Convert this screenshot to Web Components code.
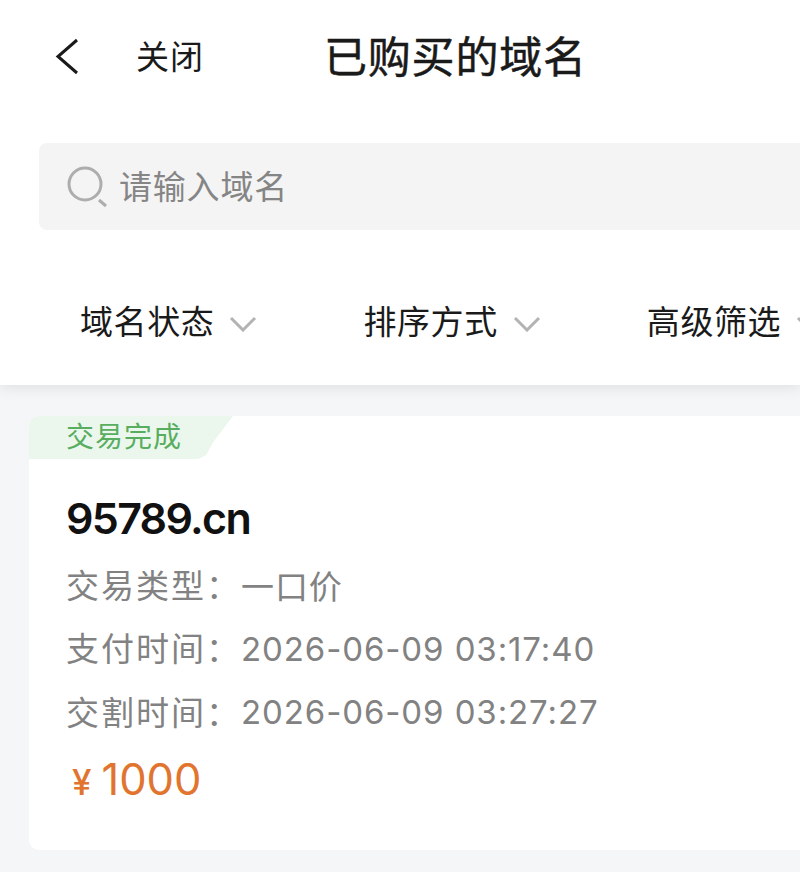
<!DOCTYPE html>
<html lang="zh-CN">
<head>
<meta charset="utf-8">
<title>已购买的域名</title>
<style>
  html, body { margin: 0; padding: 0; }
  body {
    width: 800px;
    height: 872px;
    overflow: hidden;
    background: #f5f6f8;
    font-family: "Noto Sans CJK SC", "Noto Sans", sans-serif;
  }
</style>
</head>
<body>
<top-panel>
  <nav-bar title-text="已购买的域名" close-text="关闭"></nav-bar>
  <search-box placeholder="请输入域名"></search-box>
  <filter-bar>
    <filter-item>域名状态</filter-item>
    <filter-item>排序方式</filter-item>
    <filter-item>高级筛选</filter-item>
  </filter-bar>
</top-panel>
<order-card status="交易完成" domain="95789.cn" price="1000">
  <info-row label="交易类型：">一口价</info-row>
  <info-row label="支付时间：">2026-06-09 03:17:40</info-row>
  <info-row label="交割时间：">2026-06-09 03:27:27</info-row>
</order-card>

<script>
class TopPanel extends HTMLElement {
  constructor() {
    super();
    this.attachShadow({mode: 'open'});
    this.shadowRoot.innerHTML = `
      <style>
        :host {
          display: block;
          height: 385px;
          background: #fff;
          box-shadow: 0 2px 14px rgba(0,0,0,0.10);
          overflow: hidden;
          position: relative;
        }
      </style>
      <slot></slot>
    `;
  }
}

class NavBar extends HTMLElement {
  constructor() {
    super();
    this.attachShadow({mode: 'open'});
    this.shadowRoot.innerHTML = `
      <style>
        :host {
          display: flex;
          align-items: center;
          height: 112px;
          color: #1a1a1a;
        }
        svg { margin-left: 54px; width: 26px; height: 38px; flex: none; }
        #close { margin-left: 56px; padding-bottom: 3px; font-size: 33px; line-height: 36px; width: 66px; letter-spacing: 1px; white-space: nowrap; }
        #title { margin-left: 122px; padding-bottom: 4px; font-size: 43px; line-height: 50px; letter-spacing: 0.8px; white-space: nowrap; -webkit-text-stroke: 0.5px #1a1a1a; }
      </style>
      <svg viewBox="0 0 26 38"><path d="M23 3 L4 19.5 L23 36" fill="none" stroke="#1a1a1a" stroke-width="3"/></svg>
      <span id="close"></span>
      <span id="title"></span>
    `;
    this.shadowRoot.querySelector('#close').textContent = this.getAttribute('close-text');
    this.shadowRoot.querySelector('#title').textContent = this.getAttribute('title-text');
  }
}

class SearchBox extends HTMLElement {
  constructor() {
    super();
    this.attachShadow({mode: 'open'});
    this.shadowRoot.innerHTML = `
      <style>
        :host {
          display: flex;
          align-items: center;
          margin: 31px 0 0 39px;
          height: 87px;
          background: #f4f4f4;
          border-radius: 8px 0 0 8px;
          color: #858585;
        }
        svg { margin-left: 28px; width: 42px; height: 42px; flex: none; }
        span { margin-left: 10px; padding-bottom: 4px; font-size: 33px; line-height: 44px; letter-spacing: 0.8px; }
      </style>
      <svg viewBox="0 0 42 42">
        <circle cx="18" cy="18" r="16" fill="none" stroke="#adadad" stroke-width="3"/>
        <path d="M32 34 L39 40" fill="none" stroke="#adadad" stroke-width="3"/>
      </svg>
      <span></span>
    `;
    this.shadowRoot.querySelector('span').textContent = this.getAttribute('placeholder');
  }
}

class FilterBar extends HTMLElement {
  constructor() {
    super();
    this.attachShadow({mode: 'open'});
    this.shadowRoot.innerHTML = `
      <style>
        :host {
          display: flex;
          gap: 106px;
          margin-top: 68px;
          padding-left: 80px;
          white-space: nowrap;
        }
      </style>
      <slot></slot>
    `;
  }
}

class FilterItem extends HTMLElement {
  constructor() {
    super();
    this.attachShadow({mode: 'open'});
    this.shadowRoot.innerHTML = `
      <style>
        :host {
          display: flex;
          flex: none;
          align-items: center;
          gap: 15px;
          height: 44px;
          color: #1a1a1a;
          font-size: 33px;
          letter-spacing: 0.6px;
        }
        svg { width: 28px; height: 16px; flex: none; margin-top: 8px; }
      </style>
      <slot></slot>
      <svg viewBox="0 0 28 16"><path d="M2 2 L14 14 L26 2" fill="none" stroke="#b3b3b3" stroke-width="3"/></svg>
    `;
  }
}

class OrderCard extends HTMLElement {
  constructor() {
    super();
    this.attachShadow({mode: 'open'});
    this.shadowRoot.innerHTML = `
      <style>
        :host {
          display: block;
          margin: 31px 0 0 29px;
          height: 434px;
          background: #fff;
          border-radius: 10px 0 0 10px;
          overflow: hidden;
        }
        #status {
          width: 204px;
          height: 43px;
          box-sizing: border-box;
          padding-left: 37px;
          background: #ebf7ed;
          clip-path: polygon(0 0, 100% 0, 90% 63%, 87% 90%, 83% 100%, 0 100%);
          color: #58ad5e;
          font-size: 28px;
          line-height: 39px;
          letter-spacing: 1px;
        }
        #body { padding: 29px 0 0 37px; }
        #domain {
          color: #111;
          font-family: Inter, "Noto Sans", sans-serif;
          font-size: 43px;
          font-weight: 600;
          line-height: 60px;
          letter-spacing: -1.7px;
          margin-bottom: 5px;
        }
        #price {
          display: flex;
          align-items: baseline;
          margin-top: 5px;
          color: #e1752f;
          font-family: Inter, "Noto Sans", sans-serif;
          line-height: 60px;
        }
        #yen { font-size: 35px; font-weight: 500; margin: 0 10px 0 6px; }
        #amount { font-size: 43.5px; }
      </style>
      <div id="status"></div>
      <div id="body">
        <div id="domain"></div>
        <slot></slot>
        <div id="price"><span id="yen">¥</span><span id="amount"></span></div>
      </div>
    `;
    this.shadowRoot.querySelector('#status').textContent = this.getAttribute('status');
    this.shadowRoot.querySelector('#domain').textContent = this.getAttribute('domain');
    this.shadowRoot.querySelector('#amount').textContent = this.getAttribute('price');
  }
}

class InfoRow extends HTMLElement {
  constructor() {
    super();
    this.attachShadow({mode: 'open'});
    this.shadowRoot.innerHTML = `
      <style>
        :host {
          display: flex;
          height: 63.5px;
          align-items: center;
          color: #828282;
          font-size: 33px;
          letter-spacing: 2px;
          white-space: nowrap;
        }
        #label { width: 175px; flex: none; padding-bottom: 2px; }
        #value { font-family: Inter, "Noto Sans CJK SC", sans-serif; font-size: 33px; letter-spacing: 0.9px; padding-top: 1px; }
      </style>
      <span id="label"></span>
      <span id="value"><slot></slot></span>
    `;
    this.shadowRoot.querySelector('#label').textContent = this.getAttribute('label');
  }
}

customElements.define('top-panel', TopPanel);
customElements.define('nav-bar', NavBar);
customElements.define('search-box', SearchBox);
customElements.define('filter-bar', FilterBar);
customElements.define('filter-item', FilterItem);
customElements.define('order-card', OrderCard);
customElements.define('info-row', InfoRow);
</script>
</body>
</html>
